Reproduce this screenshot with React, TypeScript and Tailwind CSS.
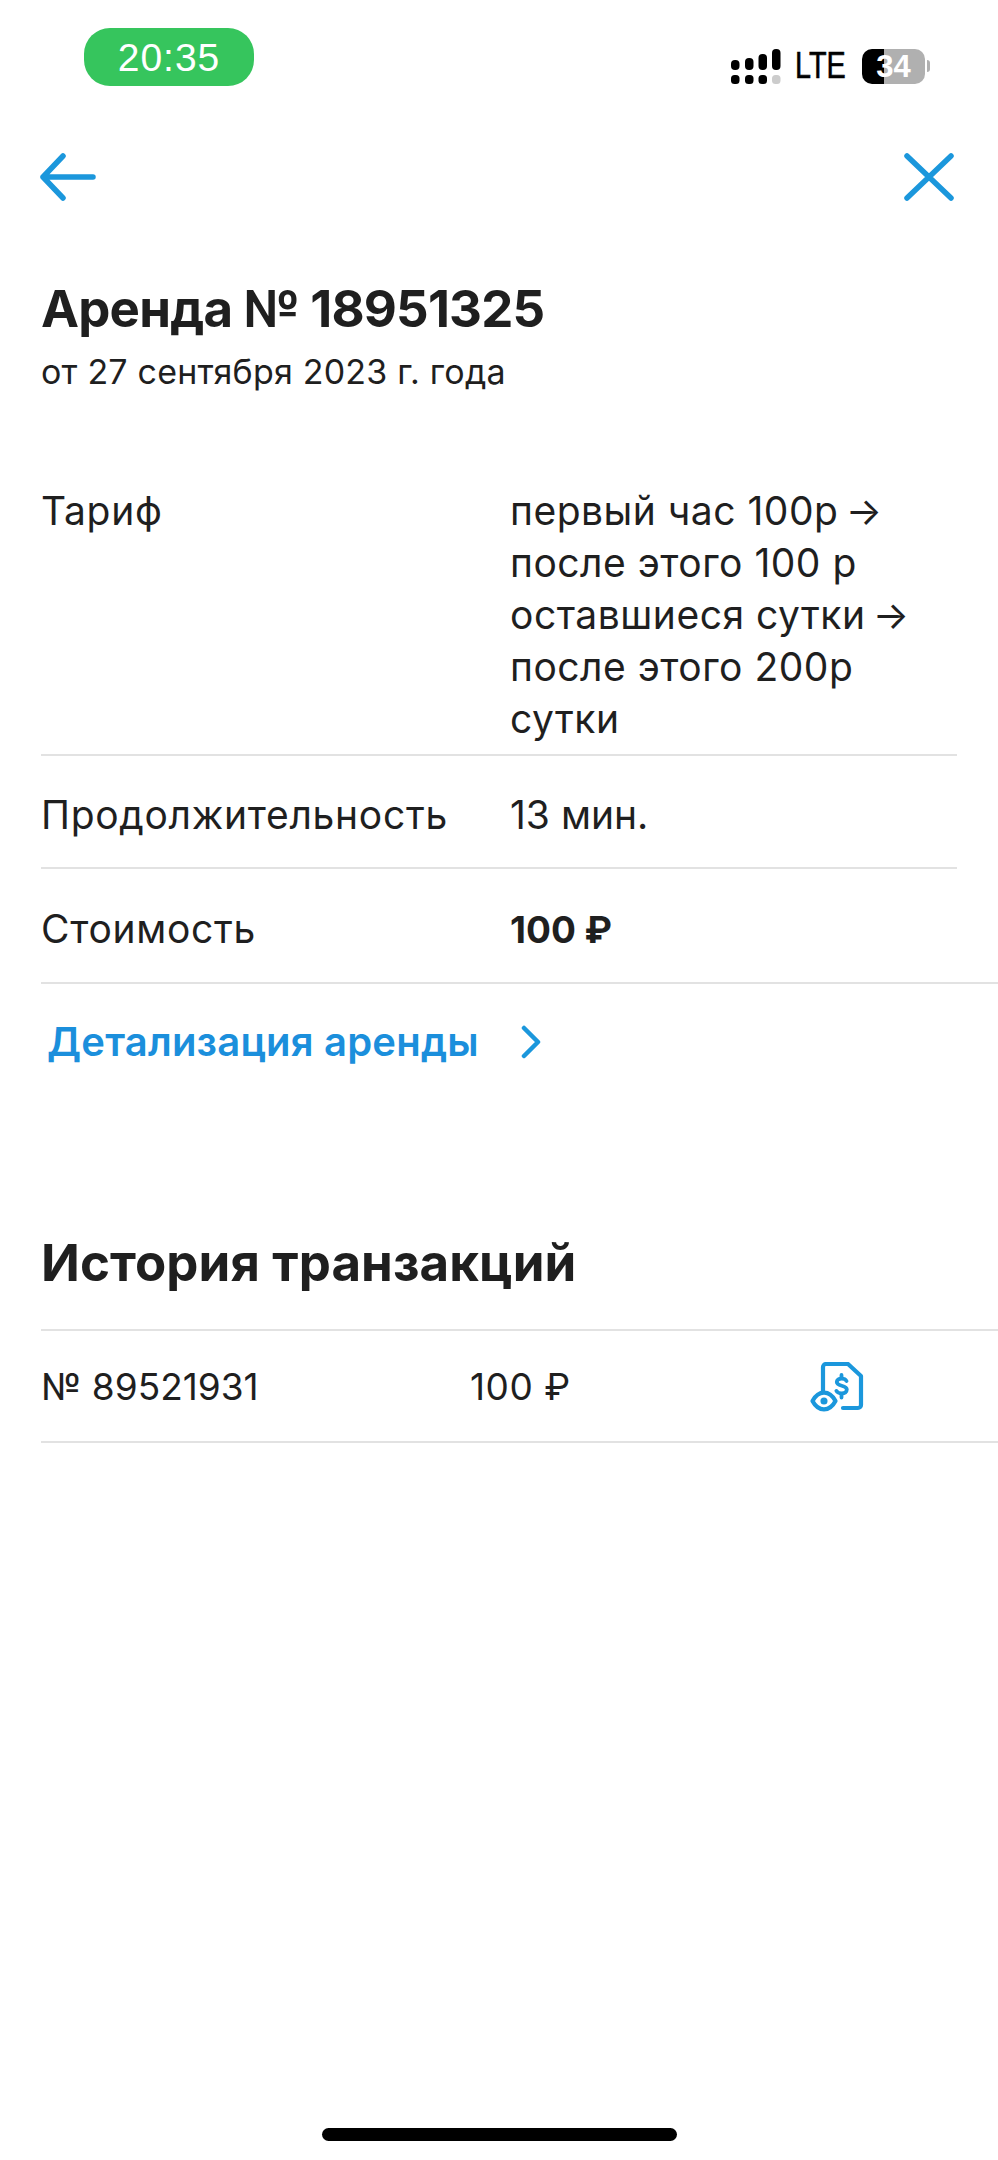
const font = "[font-family:Inter,'Noto_Sans',sans-serif]";

function SignalIcon() {
  return (
    <svg width="50" height="35" viewBox="0 0 50 35" className="block">
      <rect x="0" y="11" width="8.5" height="10" rx="4" fill="#000" />
      <rect x="14" y="9" width="8.5" height="12" rx="4" fill="#000" />
      <rect x="27.5" y="5" width="8.5" height="16" rx="4" fill="#000" />
      <rect x="41" y="0" width="8.5" height="21" rx="4" fill="#000" />
      <rect x="0" y="26" width="8.5" height="9" rx="3.5" fill="#000" />
      <rect x="14" y="26" width="8.5" height="9" rx="3.5" fill="#000" />
      <rect x="27.5" y="26" width="8.5" height="9" rx="3.5" fill="#000" />
      <rect x="41" y="26" width="8.5" height="9" rx="3.5" fill="#cccccc" />
    </svg>
  );
}

function ReceiptIcon() {
  return (
    <svg width="54" height="50" viewBox="0 0 54 50" fill="none" stroke="#1b97dc" strokeWidth="4.2" strokeLinecap="round" strokeLinejoin="round" className="block">
      <path d="M13 29V5a3 3 0 0 1 3-3h22l13 12v29a3 3 0 0 1-3 3H33" />
      <path d="M36.5 19c-.8-1.6-2.4-2.4-5-2.4-2.800 0-4.700 1.400-4.700 3.500 0 4.800 10 2.500 10 7.500 0 2.300-2 3.800-5 3.800-2.700 0-4.500-.9-5.400-2.500" strokeWidth="3.8" />
      <path d="M31.5 13v3M31.5 32v3.5" strokeWidth="3.8" />
      <path d="M2.5 39c3-5.600 7-8.400 11.500-8.400S22.500 33.400 25.500 39c-3 5.600-7 8.400-11.500 8.400S5.500 44.600 2.500 39z" />
      <circle cx="14" cy="39" r="2.8" fill="#1b97dc" strokeWidth="1.5" />
    </svg>
  );
}

function Row({ label, children, full, pad }: { label: string; children: React.ReactNode; full?: boolean; pad?: string }) {
  return (
    <div className={`grid grid-cols-[469px_1fr] border-b-2 border-[#e2e2e2] items-center ${full ? "mr-0" : "mr-[41px]"} ${pad ?? ""}`}>
      <div className="self-start">{label}</div>
      <div>{children}</div>
    </div>
  );
}

export default function App() {
  return (
    <div className={`w-[998px] h-[2160px] bg-white flex flex-col text-[#1f1f1f] ${font}`}>
      {/* Status bar */}
      <div className="flex justify-between items-start pl-[84px] pr-[68px] pt-[28px]">
        <div className="w-[170px] h-[58px] rounded-[26px] bg-[#36c55d] flex items-center justify-center text-white text-[39px] font-['Liberation_Sans',sans-serif] tracking-[1px] leading-none">
          20:35
        </div>
        <div className="flex items-center mt-[20px]">
          <SignalIcon />
          <span className="ml-[14px] w-[52px] text-[36px] leading-none text-black font-['Liberation_Sans',sans-serif] scale-x-[0.8] origin-left [-webkit-text-stroke:0.6px_#000]">LTE</span>
          <div className="ml-[15px] w-[63px] h-[35px] rounded-[10px] bg-[linear-gradient(to_right,#000_0,#000_22px,#b0b0b0_22px,#b0b0b0_100%)] flex items-center justify-center text-white text-[31px] font-bold leading-none font-['Liberation_Sans',sans-serif]">
            34
          </div>
          <div className="ml-[2px] w-[3px] h-[12px] rounded-r-full bg-[#b0b0b0]" />
        </div>
      </div>

      {/* Nav */}
      <div className="flex justify-between items-center pl-[40px] pr-[44px] mt-[67px]">
        <svg width="56" height="48" viewBox="0 0 56 48" fill="none" stroke="#1b97dc" strokeWidth="5.5" strokeLinecap="round" strokeLinejoin="round" className="block">
          <path d="M23 3 3 24l20 21M3 24h50" />
        </svg>
        <svg width="50" height="48" viewBox="0 0 50 48" fill="none" stroke="#1b97dc" strokeWidth="5.5" strokeLinecap="round" className="block">
          <path d="M3 3l44 42M47 3 3 45" />
        </svg>
      </div>

      {/* Heading */}
      <div className="pl-[41px] mt-[80px]">
        <h1 className="text-[51px] leading-[56px] font-bold tracking-[-0.8px]">Аренда № 18951325</h1>
        <p className="text-[34px] leading-[40px] mt-[15px] tracking-[0.2px]">от 27 сентября 2023 г. года</p>
      </div>

      {/* Details */}
      <div className="pl-[41px] mt-[93px] text-[39px] leading-[52px] tracking-[0.7px]">
        <Row label="Тариф" pad="pb-[9px]">
          <div className="tracking-[0.5px]">первый час 100р<span className="text-[38px] leading-none ml-[-4px]"> →</span></div>
          <div className="tracking-[0.5px]">после этого 100 р</div>
          <div className="tracking-[0.5px]">оставшиеся сутки<span className="text-[38px] leading-none ml-[-4px]"> →</span></div>
          <div className="tracking-[0.5px]">после этого 200р</div>
          <div className="tracking-[0.5px]">сутки</div>
        </Row>
        <Row label="Продолжительность" pad="pt-[33px] pb-[26px]"><span className="tracking-normal">13 мин.</span></Row>
        <Row label="Стоимость" full pad="pt-[34px] pb-[26px]"><span className="font-bold text-[37px] tracking-normal">100 ₽</span></Row>
      </div>

      {/* Link */}
      <div className="flex items-center pl-[47px] mt-[32px]">
        <span className="text-[40px] leading-[52px] font-semibold text-[#1b8fdc] w-[474px] tracking-[0.2px]">Детализация аренды</span>
        <svg width="20" height="34" viewBox="0 0 20 34" fill="none" stroke="#1b97dc" strokeWidth="4.5" strokeLinecap="round" strokeLinejoin="round" className="block">
          <path d="M3 3l14 14L3 31" />
        </svg>
      </div>

      {/* History */}
      <div className="pl-[41px] mt-[167px]">
        <h2 className="text-[51px] leading-[56px] font-bold tracking-[0.1px]">История транзакций</h2>
        <div className="mt-[38px] border-t-2 border-b-2 border-[#e2e2e2] h-[114px] pt-[2px] grid grid-cols-[429px_340px_1fr] items-center text-[37px]">
          <div>№ 89521931</div>
          <div className="tracking-[0.5px]">100 ₽</div>
          <ReceiptIcon />
        </div>
      </div>

      {/* Home bar */}
      <div className="mt-auto mb-[19px] mx-auto w-[355px] h-[13px] rounded-full bg-black" />
    </div>
  );
}
